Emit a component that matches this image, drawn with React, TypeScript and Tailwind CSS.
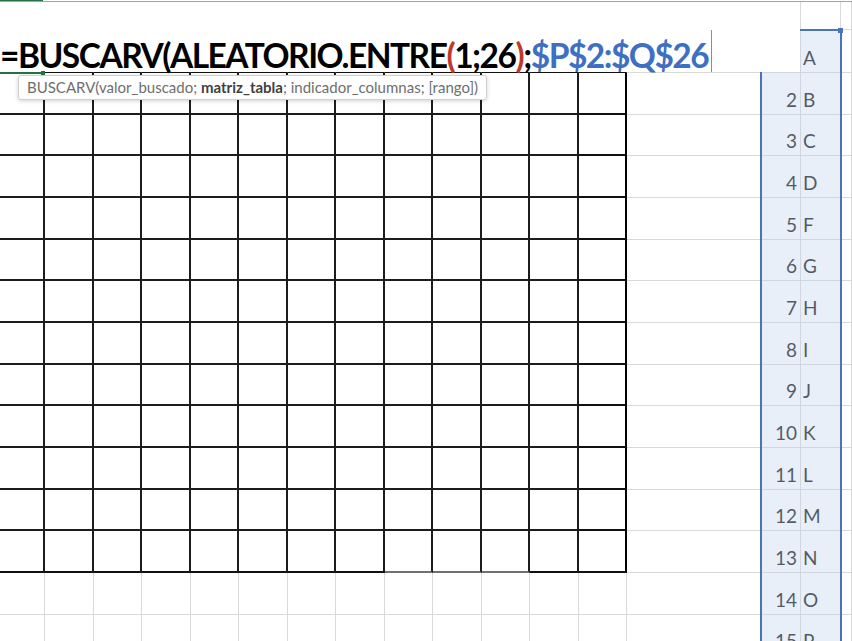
import React from "react";

const LETTERS: Record<number, string> = {
  1: "A", 2: "B", 3: "C", 4: "D", 5: "F", 6: "G", 7: "H", 8: "I",
  9: "J", 10: "K", 11: "L", 12: "M", 13: "N", 14: "O", 15: "P",
};

function cellClass(r: number, c: number): string {
  const black = r >= 2 && r <= 13 && c <= 12;
  if (black) {
    if (r === 13 && c >= 8 && c <= 10) {
      return "border-r-2 border-b-2 border-r-[#1c1c1c] border-b-[#707070]";
    }
    if (c === 12) return "border-r-2 border-b-2 border-r-black border-b-[#111]";
    if (r === 13) return "border-r-2 border-b-2 border-r-[#1c1c1c] border-b-[#111]";
    return "border-r-2 border-b-2 border-[#1c1c1c]";
  }
  if (r === 1 && c <= 12) {
    return "border-r border-b-2 border-r-[#d9d9d9] border-b-[#111]";
  }
  return "border-r border-b border-[#d9d9d9]";
}

function Cell({ r, c }: { r: number; c: number }) {
  const base = "min-w-0 overflow-hidden " + cellClass(r, c);
  if (c === 14 && r >= 2) {
    return (
      <div className={base + " flex items-end justify-end pr-[3px] pb-[5px]"}>
        <span className="font-['Lato',sans-serif] text-[19px] leading-none text-[#1a1a1a]">{r}</span>
      </div>
    );
  }
  if (c === 15 && r >= 1) {
    return (
      <div className={base + " flex items-end justify-start pl-[2px] pb-[5px]"}>
        <span className="font-['Lato',sans-serif] text-[19px] leading-none text-[#1a1a1a]">{LETTERS[r]}</span>
      </div>
    );
  }
  return <div className={base} />;
}

export default function App() {
  const rows = Array.from({ length: 16 }, (_, i) => i);
  const cols = Array.from({ length: 17 }, (_, i) => i);
  return (
    <div className="relative w-[852px] h-[641px] overflow-hidden bg-white pt-px">
      <div className="grid border-t border-[#a3a3a3] grid-cols-[45px_repeat(12,48.5px)_134px_40px_40px_1fr] grid-rows-[28px_43px_repeat(14,41.67px)]">
        {rows.map((r) => cols.map((c) => <Cell key={r + "-" + c} r={r} c={c} />))}
      </div>

      {/* selection */}
      <div className="absolute left-[760px] top-[29px] w-[82px] h-[640px] border-2 border-[#4a74b8] bg-[rgba(190,208,238,0.35)]" />
      <div className="absolute left-[838px] top-[28px] w-[5px] h-[5px] bg-[#4a74b8]" />

      {/* in-cell formula editor */}
      <div className="absolute left-0 top-[2px] w-[800px] h-[70px] bg-white flex items-end">
        <span className="whitespace-nowrap font-['Lato',sans-serif] font-bold text-[33.5px] leading-none tracking-[-1.5px] text-black">
          =BUSCARV(ALEATORIO.ENTRE<span className="text-[#c0392b]">(</span>1;26<span className="text-[#c0392b]">)</span>;<span className="text-[#3d6fc2]">$P$2:$Q$26</span>
        </span>
        <div className="w-px h-[42px] bg-[#8c8c8c] ml-[3px] shrink-0" />
      </div>

      {/* active cell border */}
      <div className="absolute left-0 top-0 w-[43px] h-[1px] bg-[#217346]" />
      <div className="absolute left-0 top-[72px] w-[43px] h-[2px] bg-[#217346]" />
      <div className="absolute left-[41px] top-[71px] w-[4px] h-[4px] bg-[#217346]" />

      {/* tooltip */}
      <div className="absolute left-[18px] top-[75px] h-[25px] px-[8px] flex items-center bg-white border border-[#d0d0d0] rounded-[3px] shadow-[0_1px_4px_rgba(0,0,0,0.18)]">
        <span className="whitespace-nowrap font-['Lato',sans-serif] text-[15px] leading-none text-[#6e6e6e]">
          BUSCARV(valor_buscado; <span className="font-bold text-[#404040]">matriz_tabla</span>; indicador_columnas; [rango])
        </span>
      </div>
    </div>
  );
}
